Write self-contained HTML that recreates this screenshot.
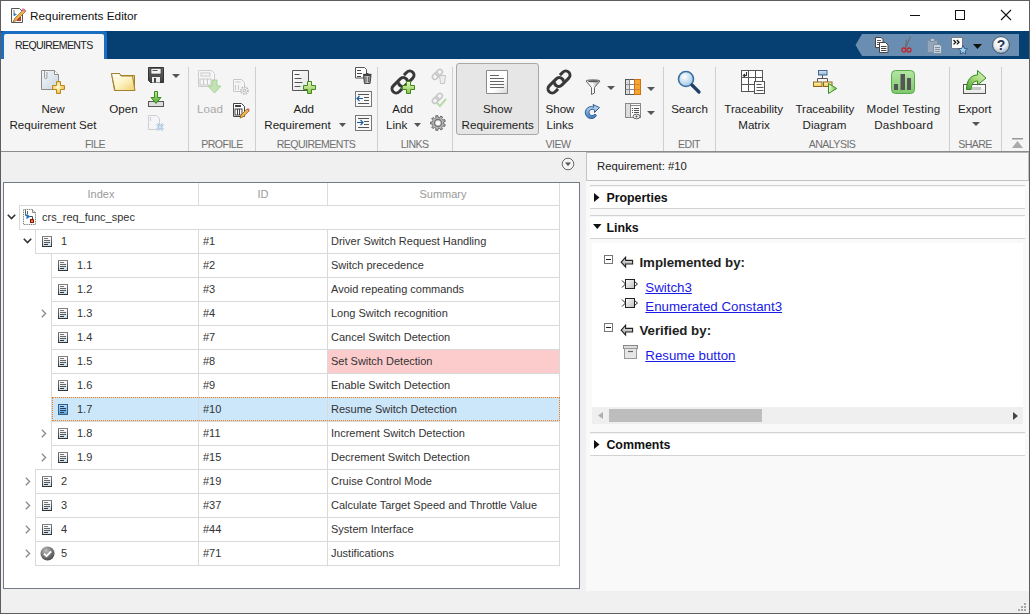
<!DOCTYPE html>
<html><head><meta charset="utf-8">
<style>
*{box-sizing:border-box;margin:0;padding:0}
html,body{width:1030px;height:614px;overflow:hidden;background:#f0f0f0;font-family:"Liberation Sans",sans-serif;color:#222;position:relative}
.a{position:absolute}
.t{position:absolute;white-space:nowrap;line-height:1}
svg{overflow:visible}
</style></head><body>

<div class="a" style="left:0px;top:0px;width:1030px;height:614px;background:#f0f0f0"></div>
<div class="a" style="left:1px;top:1px;width:1028px;height:30px;background:#fff"></div>
<div class="a" style="left:1px;top:31px;width:1028px;height:28px;background:#063f71"></div>
<div class="a" style="left:1px;top:31px;width:106px;height:28px;background:#1a6ec1;border-radius:3px 3px 0 0"></div>
<div class="a" style="left:4px;top:34px;width:100px;height:25px;background:#f5f5f5;border-radius:2px 2px 0 0"></div>
<div class="a" style="left:1px;top:59px;width:1028px;height:92px;background:#f5f5f5"></div>
<div class="a" style="left:1px;top:151px;width:1028px;height:1px;background:#8c8c8c"></div>
<svg class="a" style="left:10px;top:7px" width="16" height="16" viewBox="0 0 16 16">
<path d="M1.5 1.5h8l3 3v11h-11z" fill="#fff" stroke="#555" stroke-width="1"/>
<path d="M4 3v6" stroke="#777" stroke-width="1"/>
<path d="M4 6l3 1.5-3 1.5z" fill="#2a7bd0"/>
<rect x="7" y="10" width="4" height="4" fill="#c0392b"/>
<path d="M3 15l2-4 9-9 2 2-9 9z" fill="#f0b44a" stroke="#8a5a1a" stroke-width="0.7"/>
<path d="M13 1l3 3-1.5 1.5-3-3z" fill="#e27ca0"/>
</svg>
<div class="t" style="left:30px;top:11px;font-size:11.8px;color:#111;font-weight:400;">Requirements Editor</div>
<div class="a" style="left:910px;top:15px;width:10px;height:1px;background:#111"></div>
<div class="a" style="left:955px;top:10px;width:10px;height:10px;border:1px solid #111"></div>
<svg class="a" style="left:1001px;top:10px" width="10" height="10" viewBox="0 0 10 10"><path d="M0 0L10 10M10 0L0 10" stroke="#111" stroke-width="1.1"/></svg>
<div class="t" style="left:15px;top:40px;font-size:10.6px;color:#222;font-weight:400;letter-spacing:-0.65px">REQUIREMENTS</div>
<svg class="a" style="left:855px;top:34px" width="164" height="22" viewBox="0 0 164 22"><path d="M0.5 11L7 0h157v22H7z" fill="#6a8eb2"/></svg>
<svg class="a" style="left:875px;top:37px" width="14" height="16" viewBox="0 0 14 16">
<path d="M0.5 0.5h5.5l2 2v8h-7.5z" fill="#fff" stroke="#444"/>
<path d="M2 3.5h4M2 5.5h4M2 7.5h4" stroke="#555"/>
<path d="M4.5 5.5h6l2.5 2.5v7.5h-8.5z" fill="#fff" stroke="#444"/>
<path d="M6 9.5h5.5M6 11.5h5.5M6 13.5h5.5" stroke="#444"/></svg>
<svg class="a" style="left:901px;top:36px" width="11" height="17" viewBox="0 0 11 17">
<path d="M9.5 0.5L5 11.5M5.5 3.5L4.5 11.5" stroke="#666" stroke-width="1"/>
<circle cx="2.8" cy="14" r="2" fill="none" stroke="#c0282d" stroke-width="1.3"/>
<circle cx="8" cy="14" r="2" fill="none" stroke="#c0282d" stroke-width="1.3"/></svg>
<svg class="a" style="left:927px;top:37px" width="15" height="17" viewBox="0 0 15 17">
<path d="M0.5 3.5h10v12h-10z" fill="#93a6ba" stroke="#7b8ea2"/>
<path d="M3.5 1.5h4v3h-4z" fill="#b9c6d3" stroke="#7b8ea2"/>
<path d="M6.5 7.5h6l2 2v7h-8z" fill="#c9d4df" stroke="#7b8ea2"/>
<path d="M8 10.5h5M8 12.5h5M8 14.5h5" stroke="#7b8ea2"/></svg>
<svg class="a" style="left:951px;top:37px" width="17" height="17" viewBox="0 0 17 17">
<path d="M0.5 0.5h11v11h-11z" fill="#fff" stroke="#778"/>
<path d="M2.5 3l2.2 2.2-2.2 2.2M5.8 3l2.2 2.2-2.2 2.2" stroke="#111" fill="none" stroke-width="1.3"/>
<path d="M12 8.5l1.4 2.9 3.1.4-2.3 2.1.6 3.1-2.8-1.5-2.8 1.5.6-3.1-2.3-2.1 3.1-.4z" fill="#9ccbf0" stroke="#2c4b6e" stroke-width="0.8"/></svg>
<svg class="a" style="left:973px;top:44px" width="9" height="5" viewBox="0 0 9 5"><path d="M0 0h9l-4.5 5z" fill="#111"/></svg>
<svg class="a" style="left:992px;top:36px" width="18" height="18" viewBox="0 0 18 18">
<defs><radialGradient id="hg" cx="45%" cy="30%" r="70%"><stop offset="0" stop-color="#ffffff"/><stop offset="0.6" stop-color="#e9eef3"/><stop offset="1" stop-color="#9fb0c0"/></radialGradient></defs>
<circle cx="9" cy="9" r="8.4" fill="url(#hg)" stroke="#34495e" stroke-width="0.9"/>
<text x="9" y="14.2" font-family="Liberation Sans" font-weight="700" font-size="14" text-anchor="middle" fill="#1f3550">?</text></svg>
<div class="a" style="left:188px;top:67px;width:1px;height:84px;background:#cfcfcf"></div>
<div class="a" style="left:255px;top:67px;width:1px;height:84px;background:#cfcfcf"></div>
<div class="a" style="left:377px;top:67px;width:1px;height:84px;background:#cfcfcf"></div>
<div class="a" style="left:452px;top:67px;width:1px;height:84px;background:#cfcfcf"></div>
<div class="a" style="left:663px;top:67px;width:1px;height:84px;background:#cfcfcf"></div>
<div class="a" style="left:715px;top:67px;width:1px;height:84px;background:#cfcfcf"></div>
<div class="a" style="left:949px;top:67px;width:1px;height:84px;background:#cfcfcf"></div>
<div class="a" style="left:1001px;top:67px;width:1px;height:84px;background:#cfcfcf"></div>
<div class="t" style="left:-55px;width:300px;text-align:center;top:139.03px;font-size:10.6px;color:#707070;font-weight:400;letter-spacing:-0.55px">FILE</div>
<div class="t" style="left:72px;width:300px;text-align:center;top:139.03px;font-size:10.6px;color:#707070;font-weight:400;letter-spacing:-0.55px">PROFILE</div>
<div class="t" style="left:166px;width:300px;text-align:center;top:139.03px;font-size:10.6px;color:#707070;font-weight:400;letter-spacing:-0.55px">REQUIREMENTS</div>
<div class="t" style="left:264.7px;width:300px;text-align:center;top:139.03px;font-size:10.6px;color:#707070;font-weight:400;letter-spacing:-0.55px">LINKS</div>
<div class="t" style="left:408px;width:300px;text-align:center;top:139.03px;font-size:10.6px;color:#707070;font-weight:400;letter-spacing:-0.55px">VIEW</div>
<div class="t" style="left:539px;width:300px;text-align:center;top:139.03px;font-size:10.6px;color:#707070;font-weight:400;letter-spacing:-0.55px">EDIT</div>
<div class="t" style="left:682px;width:300px;text-align:center;top:139.03px;font-size:10.6px;color:#707070;font-weight:400;letter-spacing:-0.55px">ANALYSIS</div>
<div class="t" style="left:825px;width:300px;text-align:center;top:139.03px;font-size:10.6px;color:#707070;font-weight:400;letter-spacing:-0.55px">SHARE</div>
<svg class="a" style="left:41px;top:70px" width="25" height="24" viewBox="0 0 25 24">
<defs><linearGradient id="nd" x1="0" y1="0" x2="1" y2="1"><stop offset="0" stop-color="#f4f7fa"/><stop offset="1" stop-color="#c9d6e2"/></linearGradient>
<radialGradient id="yp" cx="45%" cy="45%" r="60%"><stop offset="0" stop-color="#fffbe8"/><stop offset="1" stop-color="#f2b82c"/></radialGradient></defs>
<path d="M0.5 0.5h13l4 4v15h-17z" fill="url(#nd)" stroke="#8c8c8c"/>
<path d="M13.5 0.5v4h4" fill="#fff" stroke="#8c8c8c"/>
<path d="M3.5 1v6.5a1.2 1.2 0 0 0 2.4 0V2" fill="none" stroke="#999" stroke-width="1"/>
<path d="M15.5 11.5h4v4h4v4h-4v4h-4v-4h-4v-4h4z" fill="url(#yp)" stroke="#b58a1c" stroke-width="1"/>
</svg>
<div class="t" style="left:-97px;width:300px;text-align:center;top:103.18px;font-size:11.6px;color:#1c1c1c;font-weight:400;">New</div>
<div class="t" style="left:-97px;width:300px;text-align:center;top:119.18px;font-size:11.6px;color:#1c1c1c;font-weight:400;">Requirement Set</div>
<svg class="a" style="left:111px;top:73px" width="25" height="18" viewBox="0 0 25 18">
<defs><linearGradient id="fo" x1="0" y1="0" x2="1" y2="1"><stop offset="0" stop-color="#ffffff"/><stop offset="0.5" stop-color="#fdf3c4"/><stop offset="1" stop-color="#efcf6a"/></linearGradient></defs>
<path d="M0.5 0.5h8l1.5 2h13.5v15h-20z" fill="#f1d98a" stroke="#a5802e"/>
<path d="M0.5 0.5h8l1.5 2.5h11.5l2.5 14.5h-20z" fill="url(#fo)" stroke="#a5802e"/>
</svg>
<div class="t" style="left:-26.5px;width:300px;text-align:center;top:103.18px;font-size:11.6px;color:#1c1c1c;font-weight:400;">Open</div>
<svg class="a" style="left:148px;top:67px" width="16" height="16" viewBox="0 0 16 16">
<defs><linearGradient id="sv" x1="0" y1="0" x2="0" y2="1"><stop offset="0" stop-color="#6a6a6a"/><stop offset="1" stop-color="#3c3c3c"/></linearGradient></defs>
<path d="M0.5 0.5h15v15h-13l-2-2z" fill="url(#sv)" stroke="#333"/>
<rect x="3" y="1.5" width="10" height="5.5" fill="#f4f4f4" stroke="#333" stroke-width="0.6"/>
<path d="M4.5 3.5h5" stroke="#555" stroke-width="1"/>
<rect x="4" y="10" width="8" height="5.5" fill="#eee"/>
<rect x="6" y="11" width="2" height="4.5" fill="#444"/>
</svg>
<svg class="a" style="left:172px;top:74px" width="8" height="4" viewBox="0 0 8 4"><path d="M0 0h8l-4 4z" fill="#555"/></svg>
<svg class="a" style="left:148px;top:91px" width="16" height="16" viewBox="0 0 16 16">
<defs><linearGradient id="ia" x1="0" y1="0" x2="0" y2="1"><stop offset="0" stop-color="#c9ec9a"/><stop offset="1" stop-color="#4aa62a"/></linearGradient></defs>
<rect x="0.5" y="10.5" width="15" height="5" fill="#ddd" stroke="#555"/>
<path d="M6.5 0.5h3v6h3.5L8 12.5 3 6.5h3.5z" fill="url(#ia)" stroke="#3a8a22" stroke-width="1"/>
</svg>
<svg class="a" style="left:148px;top:115px" width="17" height="17" viewBox="0 0 17 17">
<path d="M0.5 0.5h8l3 3v11h-11z" fill="#f3f5f8" stroke="#cfcfcf"/>
<path d="M2.5 2v4" stroke="#ccc"/>
<path d="M9 9l6 6M15 9l-6 6" stroke="#a9c3dc" stroke-width="2.6"/>
<path d="M9 9l6 6M15 9l-6 6" stroke="#dbe8f3" stroke-width="1"/>
</svg>
<svg class="a" style="left:198px;top:70px" width="24" height="24" viewBox="0 0 24 24">
<path d="M0.5 0.5h13l3 3v13h-16z" fill="#f7f7f7" stroke="#cccccc"/>
<rect x="3" y="3" width="9" height="3" fill="none" stroke="#c8c8c8"/>
<rect x="2" y="9" width="11" height="6" fill="none" stroke="#c8c8c8"/>
<path d="M5.5 9v6M9.5 9v6" stroke="#c8c8c8"/>
<path d="M14 10h5v6h4l-6.5 7-6.5-7h4z" fill="#c3e3b6" stroke="#a8d29a"/>
</svg>
<div class="t" style="left:60px;width:300px;text-align:center;top:103.18px;font-size:11.6px;color:#a9a9a9;font-weight:400;">Load</div>
<svg class="a" style="left:233px;top:79px" width="16" height="16" viewBox="0 0 16 16">
<path d="M0.5 0.5h8l3 3v9h-11z" fill="#f5f5f5" stroke="#c8c8c8"/>
<path d="M2.5 3h5M2.5 6v5M5.5 6v5" stroke="#c8c8c8"/>
<circle cx="11.5" cy="11.5" r="3.5" fill="#eee" stroke="#bbb" stroke-width="1.6" stroke-dasharray="1.6 1"/>
<circle cx="11.5" cy="11.5" r="1.3" fill="none" stroke="#bbb"/>
</svg>
<svg class="a" style="left:233px;top:103px" width="16" height="16" viewBox="0 0 16 16">
<path d="M0.5 0.5h8l3 3v10h-11z" fill="#fff" stroke="#444"/>
<rect x="2" y="2" width="6" height="2" fill="#444"/>
<rect x="2" y="6" width="7" height="6" fill="none" stroke="#444"/>
<path d="M4.5 6v6M6.5 6v6" stroke="#444"/>
<path d="M7 15l1-3 6-6 2 2-6 6z" fill="#f0b44a" stroke="#8a5a1a" stroke-width="0.7"/>
<path d="M14 6l2 2 1-1-2-2z" fill="#d66"/>
</svg>
<svg class="a" style="left:292px;top:70px" width="24" height="24" viewBox="0 0 24 24">
<defs><linearGradient id="gp" x1="0" y1="0" x2="0" y2="1"><stop offset="0" stop-color="#e9f7c9"/><stop offset="1" stop-color="#86c440"/></linearGradient>
<linearGradient id="dw" x1="0" y1="0" x2="1" y2="1"><stop offset="0" stop-color="#fff"/><stop offset="1" stop-color="#e3e3e3"/></linearGradient></defs>
<path d="M0.5 0.5h16v20h-16z" fill="url(#dw)" stroke="#555"/>
<path d="M2.5 4.5h5M2.5 8.5h7M2.5 12.5h8M2.5 16.5h6" stroke="#555" stroke-width="1"/>
<path d="M15.5 11.5h4v4h4v4h-4v4h-4v-4h-4v-4h4z" fill="url(#gp)" stroke="#3d8a1e" stroke-width="1"/>
</svg>
<div class="t" style="left:153.75px;width:300px;text-align:center;top:103.18px;font-size:11.6px;color:#1c1c1c;font-weight:400;">Add</div>
<div class="t" style="left:264.3px;top:119.18px;font-size:11.6px;color:#1c1c1c;font-weight:400;">Requirement</div>
<svg class="a" style="left:339px;top:123px" width="7" height="4" viewBox="0 0 7 4"><path d="M0 0h7l-3.5 4z" fill="#555"/></svg>
<svg class="a" style="left:355px;top:67px" width="17" height="17" viewBox="0 0 17 17">
<path d="M0.5 0.5h9l2 2v8.5h-11z" fill="#fff" stroke="#555"/>
<path d="M2 3.5h4M2 6.5h5M2 9.5h4" stroke="#444"/>
<defs><linearGradient id="tr" x1="0" y1="0" x2="1" y2="0"><stop offset="0" stop-color="#777"/><stop offset="0.5" stop-color="#ccc"/><stop offset="1" stop-color="#666"/></linearGradient></defs>
<path d="M8.5 8.5h7.5l-1 8h-5.5z" fill="url(#tr)" stroke="#444"/>
<path d="M8 7.5h8.5" stroke="#444" stroke-width="1.4"/><path d="M11 6.5h2.5" stroke="#444"/>
<path d="M11 10v5M13.5 10v5" stroke="#555" stroke-width="0.8"/>
</svg>
<svg class="a" style="left:355px;top:91px" width="17" height="16" viewBox="0 0 17 16">
<rect x="0.5" y="0.5" width="16" height="15" fill="#f7f7f7" stroke="#777"/>
<path d="M3 3.5h11M9 6.5h5M9 9.5h5M3 12.5h11" stroke="#555"/>
<path d="M2 7.5h6M4.5 5l-2.5 2.5 2.5 2.5" stroke="#1f5fa8" stroke-width="1.2" fill="none"/>
</svg>
<svg class="a" style="left:355px;top:115px" width="17" height="16" viewBox="0 0 17 16">
<rect x="0.5" y="0.5" width="16" height="15" fill="#f7f7f7" stroke="#777"/>
<path d="M3 3.5h11M9 6.5h5M9 9.5h5M3 12.5h11" stroke="#555"/>
<path d="M2 7.5h6M5.5 5l2.5 2.5-2.5 2.5" stroke="#1f5fa8" stroke-width="1.2" fill="none"/>
</svg>
<svg class="a" style="left:391px;top:70px" width="25" height="24" viewBox="0 0 25 24">
<g transform="translate(12 12) rotate(-45)" fill="none" stroke="#383838" stroke-width="3">
<path d="M-5.5 4.2H-9.6A4.2 4.2 0 0 1 -9.6 -4.2H0.3A4.2 4.2 0 0 1 3.3 3"/>
<path d="M5.5 -4.2H9.6A4.2 4.2 0 0 1 9.6 4.2H-0.3A4.2 4.2 0 0 1 -3.3 -3"/>
</g>
<path d="M15.5 11.5h4v4h4v4h-4v4h-4v-4h-4v-4h4z" fill="url(#gp)" stroke="#3d8a1e" stroke-width="1"/>
</svg>
<div class="t" style="left:252.60000000000002px;width:300px;text-align:center;top:103.18px;font-size:11.6px;color:#1c1c1c;font-weight:400;">Add</div>
<div class="t" style="left:386px;top:119.18px;font-size:11.6px;color:#1c1c1c;font-weight:400;">Link</div>
<svg class="a" style="left:414px;top:123px" width="7" height="4" viewBox="0 0 7 4"><path d="M0 0h7l-3.5 4z" fill="#555"/></svg>
<svg class="a" style="left:430px;top:67px" width="17" height="17" viewBox="0 0 17 17">
<g transform="rotate(-45 7 7)"><rect x="1" y="5" width="7" height="5" rx="2.5" fill="none" stroke="#c8c8c8" stroke-width="1.6"/><rect x="6" y="5" width="7" height="5" rx="2.5" fill="none" stroke="#c8c8c8" stroke-width="1.6"/></g>
<path d="M9.5 8.5h6l-1 8h-4z" fill="#eee" stroke="#c5c5c5"/>
</svg>
<svg class="a" style="left:430px;top:91px" width="17" height="17" viewBox="0 0 17 17">
<g transform="rotate(-45 7 7)"><rect x="1" y="5" width="7" height="5" rx="2.5" fill="none" stroke="#c8c8c8" stroke-width="1.6"/><rect x="6" y="5" width="7" height="5" rx="2.5" fill="none" stroke="#c8c8c8" stroke-width="1.6"/></g>
<path d="M7 12l3 3 6-7" stroke="#b7dcaa" stroke-width="2" fill="none"/>
</svg>
<svg class="a" style="left:430px;top:115px" width="16" height="16" viewBox="0 0 16 16">
<defs><radialGradient id="gr" cx="50%" cy="50%" r="50%"><stop offset="0.3" stop-color="#f2f2f2"/><stop offset="1" stop-color="#9a9a9a"/></radialGradient></defs>
<path d="M13.60 8.00 L13.53 8.86 L15.34 9.56 L14.62 11.52 L12.79 10.90 L12.29 11.60 L11.69 12.21 L12.62 13.91 L10.81 14.95 L9.80 13.30 L8.97 13.51 L8.12 13.60 L7.74 15.50 L5.68 15.13 L5.97 13.22 L5.20 12.85 L4.49 12.36 L2.98 13.57 L1.64 11.97 L3.09 10.70 L2.74 9.92 L2.51 9.09 L0.57 9.04 L0.57 6.96 L2.51 6.91 L2.74 6.08 L3.09 5.30 L1.64 4.03 L2.98 2.43 L4.49 3.64 L5.20 3.15 L5.97 2.78 L5.68 0.87 L7.74 0.50 L8.12 2.40 L8.97 2.49 L9.80 2.70 L10.81 1.05 L12.62 2.09 L11.69 3.79 L12.29 4.40 L12.79 5.10 L14.62 4.48 L15.34 6.44 L13.53 7.14Z" fill="url(#gr)" stroke="#6d6d6d" stroke-width="1"/>
<circle cx="8" cy="8" r="3.6" fill="none" stroke="#777" stroke-width="1.6"/>
<circle cx="8" cy="8" r="1.6" fill="#fff"/>
</svg>
<div class="a" style="left:456px;top:63px;width:83px;height:72px;background:#e6e6e6;border:1px solid #a8a8a8;border-radius:3px"></div>
<svg class="a" style="left:486px;top:70px" width="23" height="25" viewBox="0 0 23 25">
<defs><linearGradient id="sr" x1="0" y1="0" x2="1" y2="1"><stop offset="0.6" stop-color="#fff"/><stop offset="1" stop-color="#d6d6d6"/></linearGradient></defs>
<path d="M0.5 0.5h21v23h-21z" fill="url(#sr)" stroke="#8a8a8a"/>
<path d="M4 5.5h9M4 8.5h14M4 11.5h14M4 14.5h14M4 17.5h14" stroke="#666"/>
</svg>
<div class="t" style="left:347.6px;width:300px;text-align:center;top:103.18px;font-size:11.6px;color:#1c1c1c;font-weight:400;">Show</div>
<div class="t" style="left:347.7px;width:300px;text-align:center;top:119.18px;font-size:11.6px;color:#1c1c1c;font-weight:400;">Requirements</div>
<svg class="a" style="left:547px;top:70px" width="25" height="24" viewBox="0 0 25 24">
<g transform="translate(12 12) rotate(-45)" fill="none" stroke="#383838" stroke-width="3">
<path d="M-5.5 4.2H-9.6A4.2 4.2 0 0 1 -9.6 -4.2H0.3A4.2 4.2 0 0 1 3.3 3"/>
<path d="M5.5 -4.2H9.6A4.2 4.2 0 0 1 9.6 4.2H-0.3A4.2 4.2 0 0 1 -3.3 -3"/>
</g></svg>
<div class="t" style="left:410px;width:300px;text-align:center;top:103.18px;font-size:11.6px;color:#1c1c1c;font-weight:400;">Show</div>
<div class="t" style="left:410px;width:300px;text-align:center;top:119.18px;font-size:11.6px;color:#1c1c1c;font-weight:400;">Links</div>
<svg class="a" style="left:585px;top:79px" width="16" height="16" viewBox="0 0 16 16">
<defs><linearGradient id="fl" x1="0" y1="0" x2="1" y2="0"><stop offset="0" stop-color="#e6e6e6"/><stop offset="0.45" stop-color="#ffffff"/><stop offset="1" stop-color="#8a8a8a"/></linearGradient></defs>
<path d="M1 2 C1 0.5 15 0.5 15 2 L9.5 8.5 V14 L6.5 15.5 V8.5 Z" fill="url(#fl)" stroke="#666" stroke-width="1"/>
<ellipse cx="8" cy="2.3" rx="5" ry="1" fill="#555"/>
</svg>
<svg class="a" style="left:607px;top:86px" width="8" height="4" viewBox="0 0 8 4"><path d="M0 0h8l-4 4z" fill="#555"/></svg>
<svg class="a" style="left:584px;top:103px" width="17" height="16" viewBox="0 0 17 16">
<defs><linearGradient id="rf" x1="0" y1="0" x2="0" y2="1"><stop offset="0" stop-color="#cfe6f7"/><stop offset="1" stop-color="#3b78bf"/></linearGradient></defs>
<path d="M12.5 12.5 A6 6 0 1 1 10 4.2 L9 1.5 L15.5 4.5 L10.5 9.5 L10.5 7.2 A3.2 3.2 0 1 0 11 11 Z" fill="url(#rf)" stroke="#1f4f8a" stroke-width="0.9" stroke-linejoin="round"/>
</svg>
<svg class="a" style="left:625px;top:79px" width="16" height="16" viewBox="0 0 16 16">
<rect x="0.5" y="0.5" width="15" height="15" fill="#fff" stroke="#555"/>
<rect x="1" y="1" width="3.5" height="14" fill="#ddd"/>
<rect x="9.5" y="0.5" width="6" height="15" fill="#f7a531" stroke="#d0700f"/>
<path d="M0.5 5.5h15M0.5 10.5h15M4.5 0.5v15" stroke="#888"/>
<path d="M10 5.5h5M10 10.5h5" stroke="#e0851c"/>
</svg>
<svg class="a" style="left:647px;top:87px" width="8" height="4" viewBox="0 0 8 4"><path d="M0 0h8l-4 4z" fill="#555"/></svg>
<svg class="a" style="left:625px;top:103px" width="16" height="17" viewBox="0 0 16 17">
<rect x="0.5" y="0.5" width="15" height="14" fill="#fafafa" stroke="#888"/>
<rect x="1" y="1" width="4" height="13" fill="#ddd"/>
<path d="M5.5 0.5v14M5.5 2.5h10" stroke="#888"/>
<path d="M7 5.5h1M9 5.5h5M7 7.5h1M9 7.5h5M7 9.5h1M9 9.5h5" stroke="#555"/>
<ellipse cx="11.5" cy="13.5" rx="3.5" ry="2.3" fill="#eee" stroke="#666"/>
<circle cx="11.5" cy="13.5" r="1" fill="#555"/>
</svg>
<svg class="a" style="left:647px;top:111px" width="8" height="4" viewBox="0 0 8 4"><path d="M0 0h8l-4 4z" fill="#555"/></svg>
<svg class="a" style="left:677px;top:70px" width="24" height="24" viewBox="0 0 24 24">
<defs><radialGradient id="mg" cx="40%" cy="35%" r="60%"><stop offset="0" stop-color="#ffffff"/><stop offset="1" stop-color="#a8cde8"/></radialGradient></defs>
<circle cx="9" cy="9" r="7.5" fill="url(#mg)" stroke="#3a6fa0" stroke-width="1.6"/>
<path d="M15 15l7 7" stroke="#1f3f66" stroke-width="3.2" stroke-linecap="round"/>
</svg>
<div class="t" style="left:539.5px;width:300px;text-align:center;top:103.18px;font-size:11.6px;color:#1c1c1c;font-weight:400;">Search</div>
<svg class="a" style="left:741px;top:70px" width="25" height="25" viewBox="0 0 25 25">
<rect x="0.5" y="0.5" width="21" height="21" fill="#fff" stroke="#555"/>
<path d="M0.5 7.5h21M0.5 14.5h21M7.5 0.5v21M14.5 0.5v21" stroke="#555"/>
<path d="M5.5 2v3.5H2.5M4 4L2.3 5.5 4 7" stroke="#333" fill="none" stroke-width="1.1"/>
<rect x="13.5" y="11.5" width="10" height="12" fill="#fff" stroke="#555"/>
<path d="M15.5 14.5h5M15.5 17.5h7M15.5 20.5h7" stroke="#555"/>
</svg>
<div class="t" style="left:603.7px;width:300px;text-align:center;top:103.18px;font-size:11.6px;color:#1c1c1c;font-weight:400;">Traceability</div>
<div class="t" style="left:604px;width:300px;text-align:center;top:119.18px;font-size:11.6px;color:#1c1c1c;font-weight:400;">Matrix</div>
<svg class="a" style="left:813px;top:70px" width="24" height="24" viewBox="0 0 24 24">
<defs><linearGradient id="tb" x1="0" y1="0" x2="0" y2="1"><stop offset="0" stop-color="#dfe8f2"/><stop offset="1" stop-color="#8fb0d2"/></linearGradient>
<linearGradient id="ty" x1="0" y1="0" x2="0" y2="1"><stop offset="0" stop-color="#fff4c0"/><stop offset="1" stop-color="#f3c84a"/></linearGradient>
<linearGradient id="tg" x1="0" y1="0" x2="1" y2="0"><stop offset="0" stop-color="#eaf8d8"/><stop offset="1" stop-color="#6fc23c"/></linearGradient></defs>
<rect x="5.5" y="0.5" width="8.5" height="4.5" fill="url(#tb)" stroke="#3f6a99"/>
<path d="M9.5 5v3.5M4.5 8.5h10M4.5 8.5v3.5M14.5 8.5v3.5" stroke="#555" fill="none"/>
<rect x="0.5" y="12" width="8.5" height="4.5" fill="url(#ty)" stroke="#8a6a1c"/>
<rect x="10.5" y="12" width="8.5" height="4.5" fill="url(#ty)" stroke="#8a6a1c"/>
<path d="M15.5 13.5v10l8.2-5z" fill="url(#tg)" stroke="#3a8a22" stroke-linejoin="round"/>
</svg>
<div class="t" style="left:674.85px;width:300px;text-align:center;top:103.18px;font-size:11.6px;color:#1c1c1c;font-weight:400;">Traceability</div>
<div class="t" style="left:674.5px;width:300px;text-align:center;top:119.18px;font-size:11.6px;color:#1c1c1c;font-weight:400;">Diagram</div>
<svg class="a" style="left:891px;top:70px" width="24" height="24" viewBox="0 0 24 24">
<defs><linearGradient id="gd" x1="0" y1="0" x2="0" y2="1"><stop offset="0" stop-color="#b4e6a4"/><stop offset="1" stop-color="#7cc96a"/></linearGradient></defs>
<rect x="0.5" y="0.5" width="23" height="23" rx="4" fill="url(#gd)" stroke="#5aa84a"/>
<rect x="3" y="14" width="4" height="6" fill="#555"/>
<rect x="9.5" y="4" width="4.5" height="16" fill="#555"/>
<rect x="16" y="8" width="4" height="12" fill="#555"/>
</svg>
<div class="t" style="left:753.5px;width:300px;text-align:center;top:103.18px;font-size:11.6px;color:#1c1c1c;font-weight:400;letter-spacing:0.2px">Model Testing</div>
<div class="t" style="left:753.7px;width:300px;text-align:center;top:119.18px;font-size:11.6px;color:#1c1c1c;font-weight:400;letter-spacing:0.25px">Dashboard</div>
<svg class="a" style="left:963px;top:70px" width="24" height="24" viewBox="0 0 24 24">
<defs><linearGradient id="ex" x1="1" y1="0" x2="0" y2="1"><stop offset="0" stop-color="#e2f5c4"/><stop offset="0.5" stop-color="#a8d878"/><stop offset="1" stop-color="#4aa032"/></linearGradient>
<linearGradient id="et" x1="0" y1="0" x2="0" y2="1"><stop offset="0" stop-color="#fff"/><stop offset="1" stop-color="#e6e6e6"/></linearGradient></defs>
<rect x="0.5" y="14.5" width="22" height="9" fill="url(#et)" stroke="#555"/>
<rect x="3" y="17" width="15" height="3" fill="#c8c8c8"/>
<path d="M14.5 0.5L23 8L14.5 15V11C10.5 11 8.5 14 8 19.5H3.5C3.5 10 8 5 14.5 5Z" fill="url(#ex)" stroke="#2f8a22" stroke-width="1" stroke-linejoin="round"/>
</svg>
<div class="t" style="left:824.8px;width:300px;text-align:center;top:103.18px;font-size:11.6px;color:#1c1c1c;font-weight:400;">Export</div>
<svg class="a" style="left:972px;top:122px" width="8" height="4" viewBox="0 0 8 4"><path d="M0 0h8l-4 4z" fill="#555"/></svg>
<svg class="a" style="left:1012px;top:138px" width="11" height="10" viewBox="0 0 11 10"><rect x="0" y="0" width="11" height="1.5" fill="#999"/><path d="M0 10L5.5 3 11 10z" fill="#aaa"/></svg>
<svg class="a" style="left:561px;top:157px" width="14" height="14" viewBox="0 0 14 14"><circle cx="7" cy="7" r="5.8" fill="#f4f4f4" stroke="#6a6a6a" stroke-width="1"/><path d="M4 5.5h6L7 9z" fill="#555"/></svg>
<div class="a" style="left:3px;top:182px;width:577px;height:407px;background:#fff;border:1px solid #737986"></div>
<div class="a" style="left:198px;top:183px;width:1px;height:22px;background:#dcdcdc"></div>
<div class="a" style="left:327px;top:183px;width:1px;height:22px;background:#dcdcdc"></div>
<div class="a" style="left:559px;top:183px;width:1px;height:22px;background:#dcdcdc"></div>
<div class="t" style="left:-49px;width:300px;text-align:center;top:188.69px;font-size:11px;color:#9a9a9a;font-weight:400;">Index</div>
<div class="t" style="left:113px;width:300px;text-align:center;top:188.69px;font-size:11px;color:#9a9a9a;font-weight:400;">ID</div>
<div class="t" style="left:293px;width:300px;text-align:center;top:188.69px;font-size:11px;color:#9a9a9a;font-weight:400;">Summary</div>
<div class="a" style="left:19px;top:205px;width:541px;height:25px;border:1px solid #d9d9d9"></div>
<svg class="a" style="left:7px;top:214px" width="9" height="6" viewBox="0 0 9 6"><path d="M0.8 0.8L4.5 4.6 8.2 0.8" fill="none" stroke="#333" stroke-width="1.6"/></svg>
<svg class="a" style="left:23px;top:209px" width="14" height="16" viewBox="0 0 14 16">
<path d="M0.5 0.5H9.5L12.5 3.5V15.5H0.5Z" fill="#fff" stroke="#6f6f6f" stroke-dasharray="1 0.8"/>
<path d="M9.5 0.5V3.5H12.5" fill="none" stroke="#8a8a8a"/>
<path d="M2.5 1V6.5H4M4.5 2V5" fill="none" stroke="#5a6a5a"/>
<path d="M3.5 4.8L7.4 7.6L3.5 10.2Z" fill="#1f6fc5"/>
<path d="M7 7.5H9.5V10" fill="none" stroke="#444"/>
<rect x="7" y="10" width="4" height="4" fill="#8a1a10"/>
<rect x="8" y="11" width="2" height="2" fill="#f07a2a"/>
</svg>
<div class="t" style="left:42px;top:211.69px;font-size:11px;color:#333;font-weight:400;">crs_req_func_spec</div>
<div class="a" style="left:35px;top:229px;width:525px;height:25px;border:1px solid #d9d9d9"></div>
<div class="a" style="left:198px;top:229px;width:1px;height:25px;background:#d9d9d9"></div>
<div class="a" style="left:327px;top:229px;width:1px;height:25px;background:#d9d9d9"></div>
<svg class="a" style="left:23px;top:238px" width="9" height="6" viewBox="0 0 9 6"><path d="M0.8 0.8L4.5 4.6 8.2 0.8" fill="none" stroke="#333" stroke-width="1.6"/></svg>
<svg class="a" style="left:42px;top:236px" width="11" height="12" viewBox="0 0 11 12"><defs><linearGradient id="dg" x1="0" y1="0" x2="0" y2="1"><stop offset="0" stop-color="#fff"/><stop offset="1" stop-color="#c7dcef"/></linearGradient><linearGradient id="ds" x1="0" y1="0" x2="0" y2="1"><stop offset="0" stop-color="#808080"/><stop offset="1" stop-color="#333"/></linearGradient></defs>
<rect x="0.5" y="0.5" width="9" height="10" fill="url(#dg)" stroke="url(#ds)"/>
<path d="M2 2.5h4" stroke="#777"/><path d="M2 4.5h6" stroke="#666"/><path d="M2 6.5h6" stroke="#555"/><path d="M2 8.5h4" stroke="#333"/></svg>
<div class="t" style="left:61px;top:235.69px;font-size:11px;color:#333;font-weight:400;">1</div>
<div class="t" style="left:203px;top:235.69px;font-size:11px;color:#333;font-weight:400;">#1</div>
<div class="t" style="left:331px;top:235.69px;font-size:11px;color:#333;font-weight:400;">Driver Switch Request Handling</div>
<div class="a" style="left:51px;top:253px;width:509px;height:25px;border:1px solid #d9d9d9"></div>
<div class="a" style="left:198px;top:253px;width:1px;height:25px;background:#d9d9d9"></div>
<div class="a" style="left:327px;top:253px;width:1px;height:25px;background:#d9d9d9"></div>
<svg class="a" style="left:58px;top:260px" width="11" height="12" viewBox="0 0 11 12"><defs><linearGradient id="dg" x1="0" y1="0" x2="0" y2="1"><stop offset="0" stop-color="#fff"/><stop offset="1" stop-color="#c7dcef"/></linearGradient><linearGradient id="ds" x1="0" y1="0" x2="0" y2="1"><stop offset="0" stop-color="#808080"/><stop offset="1" stop-color="#333"/></linearGradient></defs>
<rect x="0.5" y="0.5" width="9" height="10" fill="url(#dg)" stroke="url(#ds)"/>
<path d="M2 2.5h4" stroke="#777"/><path d="M2 4.5h6" stroke="#666"/><path d="M2 6.5h6" stroke="#555"/><path d="M2 8.5h4" stroke="#333"/></svg>
<div class="t" style="left:77px;top:259.69px;font-size:11px;color:#333;font-weight:400;">1.1</div>
<div class="t" style="left:203px;top:259.69px;font-size:11px;color:#333;font-weight:400;">#2</div>
<div class="t" style="left:331px;top:259.69px;font-size:11px;color:#333;font-weight:400;">Switch precedence</div>
<div class="a" style="left:51px;top:277px;width:509px;height:25px;border:1px solid #d9d9d9"></div>
<div class="a" style="left:198px;top:277px;width:1px;height:25px;background:#d9d9d9"></div>
<div class="a" style="left:327px;top:277px;width:1px;height:25px;background:#d9d9d9"></div>
<svg class="a" style="left:58px;top:284px" width="11" height="12" viewBox="0 0 11 12"><defs><linearGradient id="dg" x1="0" y1="0" x2="0" y2="1"><stop offset="0" stop-color="#fff"/><stop offset="1" stop-color="#c7dcef"/></linearGradient><linearGradient id="ds" x1="0" y1="0" x2="0" y2="1"><stop offset="0" stop-color="#808080"/><stop offset="1" stop-color="#333"/></linearGradient></defs>
<rect x="0.5" y="0.5" width="9" height="10" fill="url(#dg)" stroke="url(#ds)"/>
<path d="M2 2.5h4" stroke="#777"/><path d="M2 4.5h6" stroke="#666"/><path d="M2 6.5h6" stroke="#555"/><path d="M2 8.5h4" stroke="#333"/></svg>
<div class="t" style="left:77px;top:283.69px;font-size:11px;color:#333;font-weight:400;">1.2</div>
<div class="t" style="left:203px;top:283.69px;font-size:11px;color:#333;font-weight:400;">#3</div>
<div class="t" style="left:331px;top:283.69px;font-size:11px;color:#333;font-weight:400;">Avoid repeating commands</div>
<div class="a" style="left:51px;top:301px;width:509px;height:25px;border:1px solid #d9d9d9"></div>
<div class="a" style="left:198px;top:301px;width:1px;height:25px;background:#d9d9d9"></div>
<div class="a" style="left:327px;top:301px;width:1px;height:25px;background:#d9d9d9"></div>
<svg class="a" style="left:41px;top:309px" width="6" height="9" viewBox="0 0 6 9"><path d="M0.8 0.8L4.6 4.5 0.8 8.2" fill="none" stroke="#8a8a8a" stroke-width="1.3"/></svg>
<svg class="a" style="left:58px;top:308px" width="11" height="12" viewBox="0 0 11 12"><defs><linearGradient id="dg" x1="0" y1="0" x2="0" y2="1"><stop offset="0" stop-color="#fff"/><stop offset="1" stop-color="#c7dcef"/></linearGradient><linearGradient id="ds" x1="0" y1="0" x2="0" y2="1"><stop offset="0" stop-color="#808080"/><stop offset="1" stop-color="#333"/></linearGradient></defs>
<rect x="0.5" y="0.5" width="9" height="10" fill="url(#dg)" stroke="url(#ds)"/>
<path d="M2 2.5h4" stroke="#777"/><path d="M2 4.5h6" stroke="#666"/><path d="M2 6.5h6" stroke="#555"/><path d="M2 8.5h4" stroke="#333"/></svg>
<div class="t" style="left:77px;top:307.69px;font-size:11px;color:#333;font-weight:400;">1.3</div>
<div class="t" style="left:203px;top:307.69px;font-size:11px;color:#333;font-weight:400;">#4</div>
<div class="t" style="left:331px;top:307.69px;font-size:11px;color:#333;font-weight:400;">Long Switch recognition</div>
<div class="a" style="left:51px;top:325px;width:509px;height:25px;border:1px solid #d9d9d9"></div>
<div class="a" style="left:198px;top:325px;width:1px;height:25px;background:#d9d9d9"></div>
<div class="a" style="left:327px;top:325px;width:1px;height:25px;background:#d9d9d9"></div>
<svg class="a" style="left:58px;top:332px" width="11" height="12" viewBox="0 0 11 12"><defs><linearGradient id="dg" x1="0" y1="0" x2="0" y2="1"><stop offset="0" stop-color="#fff"/><stop offset="1" stop-color="#c7dcef"/></linearGradient><linearGradient id="ds" x1="0" y1="0" x2="0" y2="1"><stop offset="0" stop-color="#808080"/><stop offset="1" stop-color="#333"/></linearGradient></defs>
<rect x="0.5" y="0.5" width="9" height="10" fill="url(#dg)" stroke="url(#ds)"/>
<path d="M2 2.5h4" stroke="#777"/><path d="M2 4.5h6" stroke="#666"/><path d="M2 6.5h6" stroke="#555"/><path d="M2 8.5h4" stroke="#333"/></svg>
<div class="t" style="left:77px;top:331.69px;font-size:11px;color:#333;font-weight:400;">1.4</div>
<div class="t" style="left:203px;top:331.69px;font-size:11px;color:#333;font-weight:400;">#7</div>
<div class="t" style="left:331px;top:331.69px;font-size:11px;color:#333;font-weight:400;">Cancel Switch Detection</div>
<div class="a" style="left:328px;top:350px;width:231px;height:23px;background:#fccccc"></div>
<div class="a" style="left:51px;top:349px;width:509px;height:25px;border:1px solid #d9d9d9"></div>
<div class="a" style="left:198px;top:349px;width:1px;height:25px;background:#d9d9d9"></div>
<div class="a" style="left:327px;top:349px;width:1px;height:25px;background:#d9d9d9"></div>
<svg class="a" style="left:58px;top:356px" width="11" height="12" viewBox="0 0 11 12"><defs><linearGradient id="dg" x1="0" y1="0" x2="0" y2="1"><stop offset="0" stop-color="#fff"/><stop offset="1" stop-color="#c7dcef"/></linearGradient><linearGradient id="ds" x1="0" y1="0" x2="0" y2="1"><stop offset="0" stop-color="#808080"/><stop offset="1" stop-color="#333"/></linearGradient></defs>
<rect x="0.5" y="0.5" width="9" height="10" fill="url(#dg)" stroke="url(#ds)"/>
<path d="M2 2.5h4" stroke="#777"/><path d="M2 4.5h6" stroke="#666"/><path d="M2 6.5h6" stroke="#555"/><path d="M2 8.5h4" stroke="#333"/></svg>
<div class="t" style="left:77px;top:355.69px;font-size:11px;color:#333;font-weight:400;">1.5</div>
<div class="t" style="left:203px;top:355.69px;font-size:11px;color:#333;font-weight:400;">#8</div>
<div class="t" style="left:331px;top:355.69px;font-size:11px;color:#333;font-weight:400;">Set Switch Detection</div>
<div class="a" style="left:51px;top:373px;width:509px;height:25px;border:1px solid #d9d9d9"></div>
<div class="a" style="left:198px;top:373px;width:1px;height:25px;background:#d9d9d9"></div>
<div class="a" style="left:327px;top:373px;width:1px;height:25px;background:#d9d9d9"></div>
<svg class="a" style="left:58px;top:380px" width="11" height="12" viewBox="0 0 11 12"><defs><linearGradient id="dg" x1="0" y1="0" x2="0" y2="1"><stop offset="0" stop-color="#fff"/><stop offset="1" stop-color="#c7dcef"/></linearGradient><linearGradient id="ds" x1="0" y1="0" x2="0" y2="1"><stop offset="0" stop-color="#808080"/><stop offset="1" stop-color="#333"/></linearGradient></defs>
<rect x="0.5" y="0.5" width="9" height="10" fill="url(#dg)" stroke="url(#ds)"/>
<path d="M2 2.5h4" stroke="#777"/><path d="M2 4.5h6" stroke="#666"/><path d="M2 6.5h6" stroke="#555"/><path d="M2 8.5h4" stroke="#333"/></svg>
<div class="t" style="left:77px;top:379.69px;font-size:11px;color:#333;font-weight:400;">1.6</div>
<div class="t" style="left:203px;top:379.69px;font-size:11px;color:#333;font-weight:400;">#9</div>
<div class="t" style="left:331px;top:379.69px;font-size:11px;color:#333;font-weight:400;">Enable Switch Detection</div>
<div class="a" style="left:52px;top:397px;width:508px;height:24px;background:#cce6fa"></div>
<div class="a" style="left:51px;top:397px;width:509px;height:25px;border:1px solid #d9d9d9"></div>
<div class="a" style="left:198px;top:397px;width:1px;height:25px;background:#d9d9d9"></div>
<div class="a" style="left:327px;top:397px;width:1px;height:25px;background:#d9d9d9"></div>
<svg class="a" style="left:58px;top:404px" width="11" height="12" viewBox="0 0 11 12"><defs><linearGradient id="dsl" x1="0" y1="0" x2="0" y2="1"><stop offset="0" stop-color="#b9dbf5"/><stop offset="1" stop-color="#5e9fd8"/></linearGradient></defs><rect x="0.5" y="0.5" width="9" height="10" fill="url(#dsl)" stroke="#2f5f90"/>
<path d="M2 2.5h4M2 4.5h6M2 6.5h6M2 8.5h4" stroke="#1d3f66" stroke-width="1"/></svg>
<div class="t" style="left:77px;top:403.69px;font-size:11px;color:#333;font-weight:400;">1.7</div>
<div class="t" style="left:203px;top:403.69px;font-size:11px;color:#333;font-weight:400;">#10</div>
<div class="t" style="left:331px;top:403.69px;font-size:11px;color:#333;font-weight:400;">Resume Switch Detection</div>
<div class="a" style="left:51px;top:421px;width:509px;height:25px;border:1px solid #d9d9d9"></div>
<div class="a" style="left:198px;top:421px;width:1px;height:25px;background:#d9d9d9"></div>
<div class="a" style="left:327px;top:421px;width:1px;height:25px;background:#d9d9d9"></div>
<svg class="a" style="left:41px;top:429px" width="6" height="9" viewBox="0 0 6 9"><path d="M0.8 0.8L4.6 4.5 0.8 8.2" fill="none" stroke="#8a8a8a" stroke-width="1.3"/></svg>
<svg class="a" style="left:58px;top:428px" width="11" height="12" viewBox="0 0 11 12"><defs><linearGradient id="dg" x1="0" y1="0" x2="0" y2="1"><stop offset="0" stop-color="#fff"/><stop offset="1" stop-color="#c7dcef"/></linearGradient><linearGradient id="ds" x1="0" y1="0" x2="0" y2="1"><stop offset="0" stop-color="#808080"/><stop offset="1" stop-color="#333"/></linearGradient></defs>
<rect x="0.5" y="0.5" width="9" height="10" fill="url(#dg)" stroke="url(#ds)"/>
<path d="M2 2.5h4" stroke="#777"/><path d="M2 4.5h6" stroke="#666"/><path d="M2 6.5h6" stroke="#555"/><path d="M2 8.5h4" stroke="#333"/></svg>
<div class="t" style="left:77px;top:427.69px;font-size:11px;color:#333;font-weight:400;">1.8</div>
<div class="t" style="left:203px;top:427.69px;font-size:11px;color:#333;font-weight:400;">#11</div>
<div class="t" style="left:331px;top:427.69px;font-size:11px;color:#333;font-weight:400;">Increment Switch Detection</div>
<div class="a" style="left:51px;top:445px;width:509px;height:25px;border:1px solid #d9d9d9"></div>
<div class="a" style="left:198px;top:445px;width:1px;height:25px;background:#d9d9d9"></div>
<div class="a" style="left:327px;top:445px;width:1px;height:25px;background:#d9d9d9"></div>
<svg class="a" style="left:41px;top:453px" width="6" height="9" viewBox="0 0 6 9"><path d="M0.8 0.8L4.6 4.5 0.8 8.2" fill="none" stroke="#8a8a8a" stroke-width="1.3"/></svg>
<svg class="a" style="left:58px;top:452px" width="11" height="12" viewBox="0 0 11 12"><defs><linearGradient id="dg" x1="0" y1="0" x2="0" y2="1"><stop offset="0" stop-color="#fff"/><stop offset="1" stop-color="#c7dcef"/></linearGradient><linearGradient id="ds" x1="0" y1="0" x2="0" y2="1"><stop offset="0" stop-color="#808080"/><stop offset="1" stop-color="#333"/></linearGradient></defs>
<rect x="0.5" y="0.5" width="9" height="10" fill="url(#dg)" stroke="url(#ds)"/>
<path d="M2 2.5h4" stroke="#777"/><path d="M2 4.5h6" stroke="#666"/><path d="M2 6.5h6" stroke="#555"/><path d="M2 8.5h4" stroke="#333"/></svg>
<div class="t" style="left:77px;top:451.69px;font-size:11px;color:#333;font-weight:400;">1.9</div>
<div class="t" style="left:203px;top:451.69px;font-size:11px;color:#333;font-weight:400;">#15</div>
<div class="t" style="left:331px;top:451.69px;font-size:11px;color:#333;font-weight:400;">Decrement Switch Detection</div>
<div class="a" style="left:35px;top:469px;width:525px;height:25px;border:1px solid #d9d9d9"></div>
<div class="a" style="left:198px;top:469px;width:1px;height:25px;background:#d9d9d9"></div>
<div class="a" style="left:327px;top:469px;width:1px;height:25px;background:#d9d9d9"></div>
<svg class="a" style="left:25px;top:477px" width="6" height="9" viewBox="0 0 6 9"><path d="M0.8 0.8L4.6 4.5 0.8 8.2" fill="none" stroke="#8a8a8a" stroke-width="1.3"/></svg>
<svg class="a" style="left:42px;top:476px" width="11" height="12" viewBox="0 0 11 12"><defs><linearGradient id="dg" x1="0" y1="0" x2="0" y2="1"><stop offset="0" stop-color="#fff"/><stop offset="1" stop-color="#c7dcef"/></linearGradient><linearGradient id="ds" x1="0" y1="0" x2="0" y2="1"><stop offset="0" stop-color="#808080"/><stop offset="1" stop-color="#333"/></linearGradient></defs>
<rect x="0.5" y="0.5" width="9" height="10" fill="url(#dg)" stroke="url(#ds)"/>
<path d="M2 2.5h4" stroke="#777"/><path d="M2 4.5h6" stroke="#666"/><path d="M2 6.5h6" stroke="#555"/><path d="M2 8.5h4" stroke="#333"/></svg>
<div class="t" style="left:61px;top:475.69px;font-size:11px;color:#333;font-weight:400;">2</div>
<div class="t" style="left:203px;top:475.69px;font-size:11px;color:#333;font-weight:400;">#19</div>
<div class="t" style="left:331px;top:475.69px;font-size:11px;color:#333;font-weight:400;">Cruise Control Mode</div>
<div class="a" style="left:35px;top:493px;width:525px;height:25px;border:1px solid #d9d9d9"></div>
<div class="a" style="left:198px;top:493px;width:1px;height:25px;background:#d9d9d9"></div>
<div class="a" style="left:327px;top:493px;width:1px;height:25px;background:#d9d9d9"></div>
<svg class="a" style="left:25px;top:501px" width="6" height="9" viewBox="0 0 6 9"><path d="M0.8 0.8L4.6 4.5 0.8 8.2" fill="none" stroke="#8a8a8a" stroke-width="1.3"/></svg>
<svg class="a" style="left:42px;top:500px" width="11" height="12" viewBox="0 0 11 12"><defs><linearGradient id="dg" x1="0" y1="0" x2="0" y2="1"><stop offset="0" stop-color="#fff"/><stop offset="1" stop-color="#c7dcef"/></linearGradient><linearGradient id="ds" x1="0" y1="0" x2="0" y2="1"><stop offset="0" stop-color="#808080"/><stop offset="1" stop-color="#333"/></linearGradient></defs>
<rect x="0.5" y="0.5" width="9" height="10" fill="url(#dg)" stroke="url(#ds)"/>
<path d="M2 2.5h4" stroke="#777"/><path d="M2 4.5h6" stroke="#666"/><path d="M2 6.5h6" stroke="#555"/><path d="M2 8.5h4" stroke="#333"/></svg>
<div class="t" style="left:61px;top:499.69px;font-size:11px;color:#333;font-weight:400;">3</div>
<div class="t" style="left:203px;top:499.69px;font-size:11px;color:#333;font-weight:400;">#37</div>
<div class="t" style="left:331px;top:499.69px;font-size:11px;color:#333;font-weight:400;">Calculate Target Speed and Throttle Value</div>
<div class="a" style="left:35px;top:517px;width:525px;height:25px;border:1px solid #d9d9d9"></div>
<div class="a" style="left:198px;top:517px;width:1px;height:25px;background:#d9d9d9"></div>
<div class="a" style="left:327px;top:517px;width:1px;height:25px;background:#d9d9d9"></div>
<svg class="a" style="left:25px;top:525px" width="6" height="9" viewBox="0 0 6 9"><path d="M0.8 0.8L4.6 4.5 0.8 8.2" fill="none" stroke="#8a8a8a" stroke-width="1.3"/></svg>
<svg class="a" style="left:42px;top:524px" width="11" height="12" viewBox="0 0 11 12"><defs><linearGradient id="dg" x1="0" y1="0" x2="0" y2="1"><stop offset="0" stop-color="#fff"/><stop offset="1" stop-color="#c7dcef"/></linearGradient><linearGradient id="ds" x1="0" y1="0" x2="0" y2="1"><stop offset="0" stop-color="#808080"/><stop offset="1" stop-color="#333"/></linearGradient></defs>
<rect x="0.5" y="0.5" width="9" height="10" fill="url(#dg)" stroke="url(#ds)"/>
<path d="M2 2.5h4" stroke="#777"/><path d="M2 4.5h6" stroke="#666"/><path d="M2 6.5h6" stroke="#555"/><path d="M2 8.5h4" stroke="#333"/></svg>
<div class="t" style="left:61px;top:523.69px;font-size:11px;color:#333;font-weight:400;">4</div>
<div class="t" style="left:203px;top:523.69px;font-size:11px;color:#333;font-weight:400;">#44</div>
<div class="t" style="left:331px;top:523.69px;font-size:11px;color:#333;font-weight:400;">System Interface</div>
<div class="a" style="left:35px;top:541px;width:525px;height:25px;border:1px solid #d9d9d9"></div>
<div class="a" style="left:198px;top:541px;width:1px;height:25px;background:#d9d9d9"></div>
<div class="a" style="left:327px;top:541px;width:1px;height:25px;background:#d9d9d9"></div>
<svg class="a" style="left:25px;top:549px" width="6" height="9" viewBox="0 0 6 9"><path d="M0.8 0.8L4.6 4.5 0.8 8.2" fill="none" stroke="#8a8a8a" stroke-width="1.3"/></svg>
<svg class="a" style="left:40px;top:546px" width="15" height="15" viewBox="0 0 15 15"><defs><radialGradient id="ck" cx="40%" cy="30%" r="70%"><stop offset="0" stop-color="#bdbdbd"/><stop offset="1" stop-color="#4a4a4a"/></radialGradient></defs>
<circle cx="7.5" cy="7.5" r="7" fill="url(#ck)"/><path d="M4 7.7l2.5 2.5 4.6-4.8" fill="none" stroke="#fff" stroke-width="1.9"/></svg>
<div class="t" style="left:61px;top:547.69px;font-size:11px;color:#333;font-weight:400;">5</div>
<div class="t" style="left:203px;top:547.69px;font-size:11px;color:#333;font-weight:400;">#71</div>
<div class="t" style="left:331px;top:547.69px;font-size:11px;color:#333;font-weight:400;">Justifications</div>
<div class="a" style="left:52px;top:397px;width:508px;height:24px;border:1px dotted #ee7f22"></div>
<div class="a" style="left:586px;top:152px;width:443px;height:439px;background:#f9f9f9"></div>
<div class="a" style="left:586px;top:152px;width:443px;height:29px;background:#f8f8f8;border-left:1px solid #c4c4c4;border-bottom:1px solid #c4c4c4;border-right:1px solid #c4c4c4;border-top:1px solid #b4b4b4"></div>
<div class="t" style="left:597px;top:161.43px;font-size:11.3px;color:#222;font-weight:400;">Requirement: #10</div>
<div class="a" style="left:590px;top:185px;width:435px;height:24px;background:#fff;border-top:1px solid #d2d2d2;border-bottom:1px solid #d2d2d2;box-shadow:inset 0 1px 0 #f4f4f4"></div>
<svg class="a" style="left:594px;top:193px" width="6" height="9" viewBox="0 0 6 9"><path d="M0 0v9l5.5-4.5z" fill="#111"/></svg>
<div class="t" style="left:606.4px;top:191.50px;font-size:12.4px;color:#111;font-weight:700;">Properties</div>
<div class="a" style="left:590px;top:215px;width:435px;height:24px;background:#fff;border-top:1px solid #d2d2d2;border-bottom:1px solid #d2d2d2;box-shadow:inset 0 1px 0 #f4f4f4"></div>
<svg class="a" style="left:593px;top:224px" width="9" height="5" viewBox="0 0 9 5"><path d="M0 0h8.5L4.25 5z" fill="#111"/></svg>
<div class="t" style="left:606.4px;top:221.50px;font-size:12.4px;color:#111;font-weight:700;">Links</div>
<div class="a" style="left:590px;top:432px;width:435px;height:24px;background:#fff;border-top:1px solid #d2d2d2;border-bottom:1px solid #d2d2d2;box-shadow:inset 0 1px 0 #f4f4f4"></div>
<svg class="a" style="left:594px;top:440px" width="6" height="9" viewBox="0 0 6 9"><path d="M0 0v9l5.5-4.5z" fill="#111"/></svg>
<div class="t" style="left:606.4px;top:438.50px;font-size:12.4px;color:#111;font-weight:700;">Comments</div>
<div class="a" style="left:592px;top:243px;width:431px;height:181px;background:#fff"></div>
<svg class="a" style="left:604px;top:255px" width="9" height="9" viewBox="0 0 9 9"><rect x="0.5" y="0.5" width="8" height="8" fill="#fff" stroke="#777"/><path d="M2 4.5h5" stroke="#222"/></svg>
<svg class="a" style="left:620px;top:256px" width="14" height="12" viewBox="0 0 14 12"><defs><linearGradient id="la" x1="0" y1="0" x2="0" y2="1"><stop offset="0" stop-color="#f4f4f4"/><stop offset="1" stop-color="#9a9a9a"/></linearGradient></defs><path d="M1.2 6.2L5.6 1.3V4.4H12.6V8H5.6V11.1Z" fill="url(#la)" stroke="#222" stroke-width="1.1" stroke-linejoin="miter"/></svg>
<div class="t" style="left:639.4px;top:255.74px;font-size:13.3px;color:#222;font-weight:700;">Implemented by:</div>
<svg class="a" style="left:622px;top:279px" width="17" height="10" viewBox="0 0 17 10"><defs><linearGradient id="bk" x1="0" y1="0" x2="1" y2="1"><stop offset="0" stop-color="#fff"/><stop offset="1" stop-color="#bbb"/></linearGradient></defs>
<path d="M0 1.5l3.5 3.5-3.5 3.5" fill="none" stroke="#222"/><rect x="3.5" y="0.5" width="9" height="9" fill="url(#bk)" stroke="#222"/><path d="M12.5 2.5l3 2.5-3 2.5" fill="none" stroke="#222"/></svg>
<div class="t" style="left:645.3px;top:280.74px;font-size:13.3px;color:#1a1ae6;font-weight:400;"><u>Switch3</u></div>
<svg class="a" style="left:622px;top:298px" width="17" height="10" viewBox="0 0 17 10"><defs><linearGradient id="bk" x1="0" y1="0" x2="1" y2="1"><stop offset="0" stop-color="#fff"/><stop offset="1" stop-color="#bbb"/></linearGradient></defs>
<path d="M0 1.5l3.5 3.5-3.5 3.5" fill="none" stroke="#222"/><rect x="3.5" y="0.5" width="9" height="9" fill="url(#bk)" stroke="#222"/><path d="M12.5 2.5l3 2.5-3 2.5" fill="none" stroke="#222"/></svg>
<div class="t" style="left:645.3px;top:299.74px;font-size:13.3px;color:#1a1ae6;font-weight:400;"><u>Enumerated Constant3</u></div>
<svg class="a" style="left:604px;top:323px" width="9" height="9" viewBox="0 0 9 9"><rect x="0.5" y="0.5" width="8" height="8" fill="#fff" stroke="#777"/><path d="M2 4.5h5" stroke="#222"/></svg>
<svg class="a" style="left:620px;top:324px" width="14" height="12" viewBox="0 0 14 12"><defs><linearGradient id="la" x1="0" y1="0" x2="0" y2="1"><stop offset="0" stop-color="#f4f4f4"/><stop offset="1" stop-color="#9a9a9a"/></linearGradient></defs><path d="M1.2 6.2L5.6 1.3V4.4H12.6V8H5.6V11.1Z" fill="url(#la)" stroke="#222" stroke-width="1.1" stroke-linejoin="miter"/></svg>
<div class="t" style="left:639.4px;top:323.74px;font-size:13.3px;color:#222;font-weight:700;">Verified by:</div>
<svg class="a" style="left:623px;top:345px" width="15" height="14" viewBox="0 0 15 14"><rect x="0.5" y="0.5" width="14" height="3" fill="#ddd" stroke="#888"/>
<rect x="1.5" y="3.5" width="12" height="10" fill="#e6e6e6" stroke="#999"/><path d="M5 6.5h5" stroke="#666" stroke-width="1.2"/></svg>
<div class="t" style="left:645.3px;top:348.74px;font-size:13.3px;color:#1a1ae6;font-weight:400;"><u>Resume button</u></div>
<div class="a" style="left:592px;top:407px;width:431px;height:17px;background:#efefef"></div>
<svg class="a" style="left:598px;top:412px" width="5" height="7" viewBox="0 0 5 7"><path d="M5 0v7L0 3.5z" fill="#b0b0b0"/></svg>
<div class="a" style="left:609px;top:409px;width:153px;height:13px;background:#bdbdbd"></div>
<svg class="a" style="left:1013px;top:412px" width="5" height="8" viewBox="0 0 5 8"><path d="M0 0v8l5-4z" fill="#444"/></svg>
<div class="a" style="left:1024px;top:603px;width:2px;height:2px;background:#a8a8a8"></div>
<div class="a" style="left:1021px;top:606px;width:2px;height:2px;background:#a8a8a8"></div>
<div class="a" style="left:1024px;top:606px;width:2px;height:2px;background:#a8a8a8"></div>
<div class="a" style="left:1018px;top:609px;width:2px;height:2px;background:#a8a8a8"></div>
<div class="a" style="left:1021px;top:609px;width:2px;height:2px;background:#a8a8a8"></div>
<div class="a" style="left:1024px;top:609px;width:2px;height:2px;background:#a8a8a8"></div>
<div class="a" style="left:0px;top:0px;width:1030px;height:614px;border:1px solid #5e5e5e;pointer-events:none"></div>
</body></html>
